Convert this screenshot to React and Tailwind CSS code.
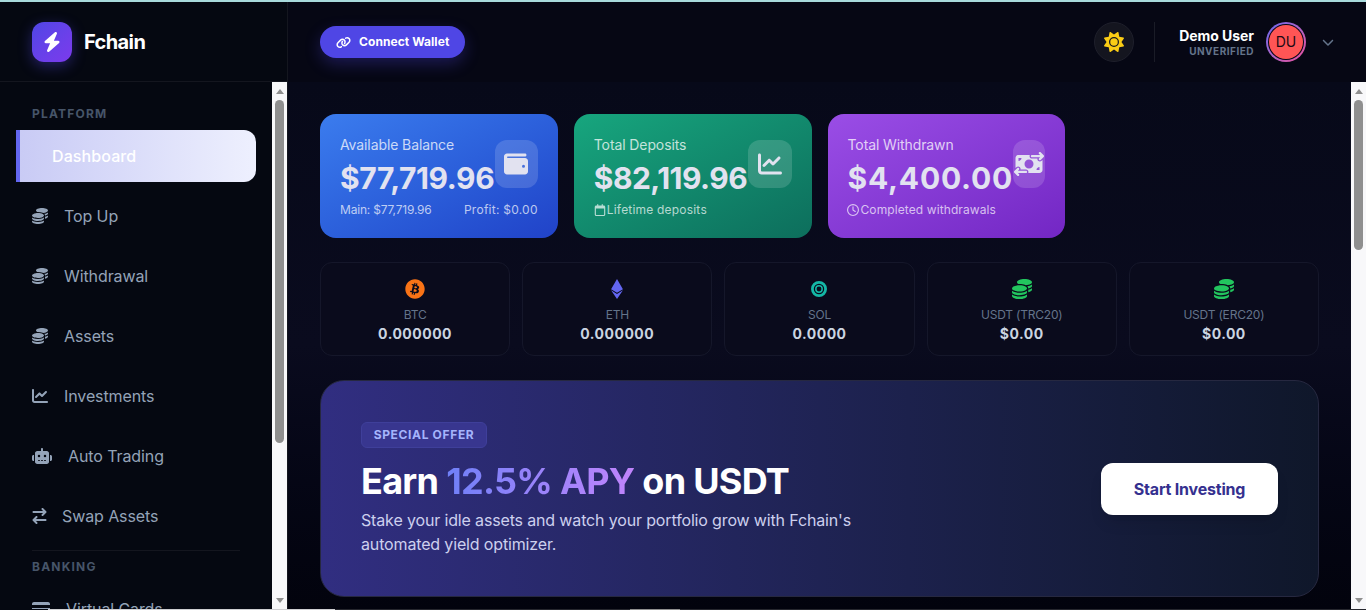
import React from "react";
import {
  FaBolt,
  FaCoins,
  FaChartLine,
  FaRobot,
  FaArrowRightArrowLeft,
  FaCreditCard,
  FaLink,
  FaSun,
  FaChevronDown,
  FaWallet,
  FaBitcoin,
  FaEthereum,
  FaRegCalendar,
  FaRegClock,
  FaMoneyBillTransfer,
} from "react-icons/fa6";

const SolIcon = ({ className }) => (
  <svg viewBox="0 0 20 20" fill="none" stroke="currentColor" className={className}>
    <circle cx="10" cy="10" r="6.6" strokeWidth="2.8" />
    <circle cx="10" cy="10" r="3.2" strokeWidth="1.5" />
  </svg>
);

const navItems = [
  { label: "Top Up", icon: FaCoins, iconClass: "w-4 h-4", gap: "gap-4" },
  { label: "Withdrawal", icon: FaCoins, iconClass: "w-4 h-4", gap: "gap-4" },
  { label: "Assets", icon: FaCoins, iconClass: "w-4 h-4", gap: "gap-4" },
  { label: "Investments", icon: FaChartLine, iconClass: "w-4 h-4", gap: "gap-4" },
  { label: "Auto Trading", icon: FaRobot, iconClass: "w-5 h-5", gap: "gap-4" },
  { label: "Swap Assets", icon: FaArrowRightArrowLeft, iconClass: "w-[15px] h-4", gap: "gap-[15px]" },
];

const assets = [
  { name: "BTC", value: "0.000000", icon: FaBitcoin, color: "text-[#f97316]" },
  { name: "ETH", value: "0.000000", icon: FaEthereum, color: "text-[#6366f1]" },
  { name: "SOL", value: "0.0000", icon: SolIcon, color: "text-[#14b8a6]" },
  { name: "USDT (TRC20)", value: "$0.00", icon: FaCoins, color: "text-[#22c55e]" },
  { name: "USDT (ERC20)", value: "$0.00", icon: FaCoins, color: "text-[#22c55e]" },
];

const Scrollbar = ({ thumb }) => (
  <div className="w-[15px] shrink-0 bg-[#f8f8fa] flex flex-col items-center">
    <div className="h-[18px] flex items-center justify-center shrink-0">
      <div className="w-0 h-0 border-x-[4px] border-x-transparent border-b-[5px] border-b-[#8f8f8f]" />
    </div>
    <div className={`w-[9px] bg-[#8f8f8f] rounded-full shrink-0 ${thumb}`} />
    <div className="flex-1" />
    <div className="h-[18px] flex items-center justify-center shrink-0">
      <div className="w-0 h-0 border-x-[4px] border-x-transparent border-t-[5px] border-t-[#8f8f8f]" />
    </div>
  </div>
);

const StatCard = ({ gradient, title, amount, amountClass, icon: Icon, iconClass, iconBox, children }) => (
  <div className={`relative h-[124px] rounded-2xl px-5 pt-[22px] text-white/85 ${gradient}`}>
    <p className="text-sm leading-[18px] tracking-[-0.1px] text-white/75">{title}</p>
    <p className={`mt-[6px] text-[30px] leading-[36px] font-bold text-[#e2e2f0] whitespace-nowrap ${amountClass}`}>{amount}</p>
    <div className="mt-[6px] flex items-center justify-between text-xs leading-4 text-white/70">
      {children}
    </div>
    <div className={`absolute top-[26px] h-12 rounded-xl bg-white/15 flex items-center justify-center ${iconBox}`}>
      <Icon className={`text-[#e2e2f0] shrink-0 ${iconClass}`} />
    </div>
  </div>
);

const App = () => {
  return (
    <div className="h-[610px] w-full overflow-hidden flex flex-col bg-[#05060f] font-['Inter',sans-serif]">
      <div className="h-[2px] shrink-0 bg-[#a8dadc]" />

      <div className="flex flex-1 min-h-0">
        {/* sidebar */}
        <aside className="w-[288px] shrink-0 flex flex-col bg-[#050811] border-r border-[#14161f]">
          <div className="h-[80px] shrink-0 flex items-center gap-3 pl-8 border-b border-[#14161f]">
            <div className="w-10 h-10 rounded-xl bg-gradient-to-br from-[#4f46e5] to-[#7c3aed] flex items-center justify-center shadow-[0_4px_14px_rgba(79,70,229,0.4)]">
              <FaBolt className="text-white text-xl" />
            </div>
            <span className="text-[20px] font-bold tracking-[-0.6px] text-white">Fchain</span>
          </div>

          <div className="flex flex-1 min-h-0">
            <nav className="flex-1 min-w-0 overflow-hidden px-4 pt-6">
              <p className="px-4 text-xs leading-4 font-bold tracking-[1.2px] text-[#475569]">PLATFORM</p>
              <div className="mt-2 h-[52px] rounded-r-xl bg-gradient-to-r from-[#c9cbf5] to-[#eef0fe] border-l-4 border-[#6366f1] flex items-center pl-8 text-base font-medium tracking-[0.1px] text-white">
                Dashboard
              </div>
              {navItems.map((item) => (
                <div
                  key={item.label}
                  className={`mt-2 h-[52px] flex items-center px-4 text-base tracking-[-0.1px] text-[#94a3b8] ${item.gap}`}
                >
                  <item.icon className={`shrink-0 ${item.iconClass}`} />
                  <span className="whitespace-nowrap">{item.label}</span>
                </div>
              ))}
              <div className="mx-4 mt-2 border-t border-[#14161f]" />
              <p className="mt-2 px-4 text-xs leading-4 font-bold tracking-[1.2px] text-[#475569]">BANKING</p>
              <div className="mt-2 h-[52px] flex items-center gap-4 px-4 text-base tracking-[-0.1px] text-[#94a3b8]">
                <FaCreditCard className="shrink-0 text-lg" />
                <span>Virtual Cards</span>
              </div>
            </nav>
            <Scrollbar thumb="h-[343px]" />
          </div>
        </aside>

        <div className="flex-1 min-w-0 flex flex-col bg-[#060714]">
          {/* top bar */}
          <header className="h-[80px] shrink-0 flex items-center justify-between pl-8 pr-8">
            <button className="h-8 px-4 rounded-full bg-[#4f46e5] flex items-center gap-2 text-xs font-bold tracking-[0.07px] text-white shadow-[0_6px_16px_rgba(79,70,229,0.3)]">
              <FaLink className="w-[15px] h-[15px]" />
              Connect Wallet
            </button>

            <div className="flex items-center">
              <div className="w-10 h-10 rounded-full bg-[#14151f] border border-[#1e1f2b] flex items-center justify-center">
                <FaSun className="text-[#facc15] text-xl" />
              </div>
              <div className="mx-5 w-px h-10 bg-[#1a1c27]" />
              <div className="mr-3 ml-1 text-right">
                <p className="text-sm leading-[18px] font-bold tracking-[-0.05px] text-white">Demo User</p>
                <p className="text-[10px] leading-3 font-bold tracking-[0.5px] text-[#64748b]">UNVERIFIED</p>
              </div>
              <div className="w-10 h-10 rounded-full bg-gradient-to-br from-[#6366f1] to-[#ec4899] p-[2px]">
                <div className="w-full h-full rounded-full bg-[#060714] p-px">
                  <div className="w-full h-full rounded-full bg-[#ff5555] flex items-center justify-center text-sm text-[#1a0a14]">
                    DU
                  </div>
                </div>
              </div>
              <FaChevronDown className="ml-4 text-xs text-[#64748b]" />
            </div>
          </header>

          <div className="flex flex-1 min-h-0">
            <main className="flex-1 min-w-0 overflow-hidden px-8 pt-8 bg-gradient-to-b from-[#070919] via-[#0a0b1e] to-[#02030d]">
              <div className="grid grid-cols-4 gap-4">
                <StatCard
                  gradient="bg-gradient-to-br from-[#3b7cee] to-[#2142c8]"
                  title="Available Balance"
                  amount="$77,719.96"
                  amountClass="tracking-[-0.4px]"
                  icon={FaWallet}
                  iconClass="w-6 h-6"
                  iconBox="right-5 w-[43px]"
                >
                  <span className="tracking-[-0.2px]">Main: $77,719.96</span>
                  <span className="tracking-[0.25px]">Profit: $0.00</span>
                </StatCard>
                <StatCard
                  gradient="bg-gradient-to-br from-[#17a67e] to-[#0d6e5c]"
                  title="Total Deposits"
                  amount="$82,119.96"
                  amountClass="tracking-[-0.5px]"
                  icon={FaChartLine}
                  iconClass="w-6 h-6"
                  iconBox="right-5 w-[44px]"
                >
                  <span className="flex items-center gap-px tracking-[0.2px]">
                    <FaRegCalendar className="text-xs" />
                    Lifetime deposits
                  </span>
                </StatCard>
                <StatCard
                  gradient="bg-gradient-to-br from-[#9a4de6] to-[#7326c4]"
                  title="Total Withdrawn"
                  amount="$4,400.00"
                  amountClass="tracking-[0.8px]"
                  icon={FaMoneyBillTransfer}
                  iconClass="w-[30px] h-6"
                  iconBox="right-5 w-8"
                >
                  <span className="flex items-center gap-[2px] tracking-[0.1px] -ml-px">
                    <FaRegClock className="text-xs" />
                    Completed withdrawals
                  </span>
                </StatCard>
              </div>

              <div className="mt-6 grid grid-cols-5 gap-3">
                {assets.map((asset) => (
                  <div
                    key={asset.name}
                    className="h-[94px] rounded-xl border border-[#15172a] bg-[#0a0b1c] flex flex-col items-center pt-4"
                  >
                    <asset.icon className={`w-5 h-5 ${asset.color}`} />
                    <p className="mt-2 text-xs leading-4 tracking-[-0.2px] text-[#64748b]">{asset.name}</p>
                    <p className="mt-px text-sm leading-5 font-bold tracking-[0.5px] text-[#cbd5e1]">{asset.value}</p>
                  </div>
                ))}
              </div>

              <section className="mt-6 h-[217px] rounded-3xl border border-[#262840] bg-gradient-to-r from-[#312e81] to-[#0f172a] pl-10 pr-10 flex items-center justify-between">
                <div>
                  <span className="block w-[126px] h-[26px] rounded-md border border-[#3f3f9a] bg-[#38368f] text-center text-xs leading-6 font-bold tracking-[0.65px] text-[#a5b4fc]">
                    SPECIAL OFFER
                  </span>
                  <h2 className="mt-[13px] text-[36px] leading-10 font-bold tracking-[-0.7px] text-white">
                    Earn{" "}
                    <span className="bg-gradient-to-r from-[#6f80f8] to-[#c084fc] bg-clip-text text-transparent">
                      12.5% APY
                    </span>{" "}
                    on USDT
                  </h2>
                  <p className="mt-[7px] w-[512px] text-base leading-6 tracking-[-0.15px] text-[#cdd0ee]">
                    Stake your idle assets and watch your portfolio grow with Fchain's automated yield optimizer.
                  </p>
                </div>
                <button className="w-[177px] h-[52px] rounded-xl bg-white text-base font-bold tracking-[-0.2px] text-[#35308f] shadow-lg">
                  Start Investing
                </button>
              </section>
            </main>
            <Scrollbar thumb="h-[150px]" />
          </div>
        </div>
      </div>

      {/* 1px sliver of whatever sits under the window */}
      <div className="h-px shrink-0 flex bg-[#26272e]">
        <div className="w-12 bg-[#050811]" />
        <div className="w-[287px] bg-[#cfcfd2]" />
        <div className="w-[295px]" />
        <div className="w-[50px] bg-[#8f8f8f]" />
      </div>
    </div>
  );
};

export default App;
